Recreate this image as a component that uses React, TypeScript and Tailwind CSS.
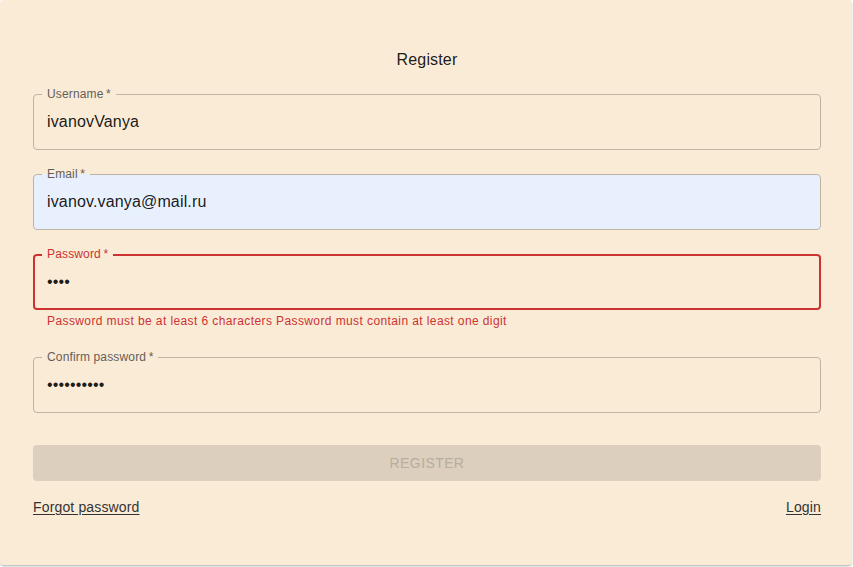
import React from 'react';

type FieldProps = {
  label: string;
  value: string;
  type?: string;
  error?: string;
  autofilled?: boolean;
};

function Field({ label, value, type = 'text', error, autofilled }: FieldProps) {
  return (
    <div className="flex flex-col">
      <div className="relative h-14">
        <input
          readOnly
          type={type}
          value={value}
          className={`h-full w-full rounded px-[14px] text-base tracking-[0.15px] text-black/90 outline-none ${
            autofilled ? 'bg-[#e8f0fe]' : 'bg-transparent'
          }`}
        />
        <fieldset
          className={`pointer-events-none absolute inset-x-0 bottom-0 top-[-5px] m-0 rounded px-2 ${
            error ? 'border-2 border-[#cd3232]' : 'border border-[#bfb3a4]'
          }`}
        >
          <legend
            className={`px-[5px] text-xs leading-[11px] tracking-[0.15px] ${
              error ? '-ml-px text-[#cd3232]' : 'text-[#655e56]'
            }`}
          >
            {label}
            {'\u2009*'}
          </legend>
        </fieldset>
      </div>
      {error && (
        <p className="mx-[14px] mb-[2px] mt-px text-xs leading-5 tracking-[0.4px] text-[#cd3232]">{error}</p>
      )}
    </div>
  );
}

export default function App() {
  return (
    <div className="min-h-screen bg-white font-['Liberation_Sans',Arial,sans-serif]">
      <div className="h-[565px] w-[852px] rounded bg-[#faebd7] pl-[33px] pr-[31px] pt-[48px] shadow-[0_2px_2px_-1px_rgba(0,0,0,0.2),0_1px_3px_0_rgba(0,0,0,0.15)]">
        <h1 className="text-center text-base leading-6 tracking-[0.15px] text-black/90">Register</h1>
        <div className="mt-[22px] flex flex-col gap-6">
          <Field label="Username" value="ivanovVanya" />
          <Field label="Email" value="ivanov.vanya@mail.ru" autofilled />
          <Field
            label="Password"
            value="1234"
            type="password"
            error="Password must be at least 6 characters Password must contain at least one digit"
          />
          <Field label="Confirm password" value="1234567890" type="password" />
        </div>
        <button
          disabled
          className="mt-8 h-9 w-full rounded bg-[#dccfbd] text-sm uppercase tracking-[0.4px] text-[#b8ad9f]"
        >
          Register
        </button>
        <div className="mt-4 flex items-center justify-between text-sm leading-5 tracking-[0.15px] text-[#333]">
          <a className="underline underline-offset-2" href="#">Forgot password</a>
          <a className="underline underline-offset-2" href="#">Login</a>
        </div>
      </div>
    </div>
  );
}
